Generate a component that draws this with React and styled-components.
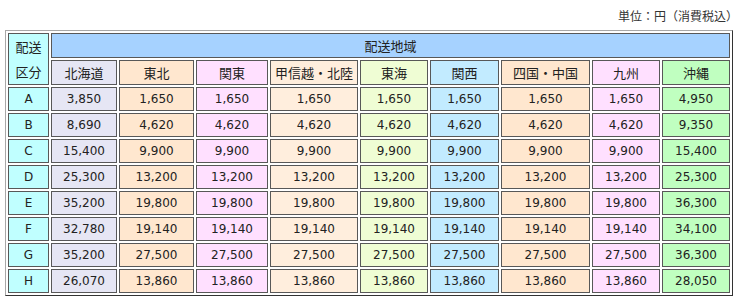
import React from "react";
import styled, { createGlobalStyle } from "styled-components";

const Global = createGlobalStyle`
  html, body { margin: 0; padding: 0; background: #fff; }
  body {
    font-family: "DejaVu Sans", Verdana, "Noto Sans CJK JP", sans-serif;
    color: #222;
  }
`;

const Page = styled.div`
  width: 728px;
  padding: 0 7px 0 5px;
`;

const Unit = styled.div`
  height: 30px;
  display: flex;
  align-items: center;
  justify-content: flex-end;
  margin-right: -5px;
  font-size: 12px;
  color: #333;
  font-family: "Noto Sans CJK JP", "DejaVu Sans", sans-serif;
`;

const Table = styled.table`
  width: 728px;
  border-collapse: separate;
  border-spacing: 2px;
  border: 1px solid;
  border-color: #a8a8a8 #333 #333 #a8a8a8;
  box-sizing: border-box;
`;

const Cell = styled.td`
  border: 1px solid #585858;
  padding: 0;
  height: 22px;
  text-align: center;
  vertical-align: middle;
  background: ${(p) => p.$bg};
  font-size: ${(p) => (p.$cjk ? "13px" : "12px")};
  font-weight: normal;
  font-family: ${(p) =>
    p.$cjk
      ? '"Noto Sans CJK JP", "DejaVu Sans", sans-serif'
      : '"DejaVu Sans", Verdana, "Noto Sans CJK JP", sans-serif'};
  color: #222;
  white-space: nowrap;
  line-height: 1.2;
  ${(p) => (p.$w ? `width: ${p.$w - 2}px;` : "")}
`;

const KubunHead = styled(Cell)`
  line-height: 25px;
`;

const cols = [
  { name: "北海道", bg: "#e6e6f4", w: 66 },
  { name: "東北", bg: "#ffe7cf", w: 75 },
  { name: "関東", bg: "#ffe0ff", w: 72 },
  { name: "甲信越・北陸", bg: "#ffeedd", w: 88 },
  { name: "東海", bg: "#effdd4", w: 68 },
  { name: "関西", bg: "#c2ebff", w: 69 },
  { name: "四国・中国", bg: "#ffe7cf", w: 89 },
  { name: "九州", bg: "#ffe0ff", w: 68 },
  { name: "沖縄", bg: "#c0ffc0", w: 68 },
];

const rows = [
  ["A", "3,850", "1,650", "1,650", "1,650", "1,650", "1,650", "1,650", "1,650", "4,950"],
  ["B", "8,690", "4,620", "4,620", "4,620", "4,620", "4,620", "4,620", "4,620", "9,350"],
  ["C", "15,400", "9,900", "9,900", "9,900", "9,900", "9,900", "9,900", "9,900", "15,400"],
  ["D", "25,300", "13,200", "13,200", "13,200", "13,200", "13,200", "13,200", "13,200", "25,300"],
  ["E", "35,200", "19,800", "19,800", "19,800", "19,800", "19,800", "19,800", "19,800", "36,300"],
  ["F", "32,780", "19,140", "19,140", "19,140", "19,140", "19,140", "19,140", "19,140", "34,100"],
  ["G", "35,200", "27,500", "27,500", "27,500", "27,500", "27,500", "27,500", "27,500", "36,300"],
  ["H", "26,070", "13,860", "13,860", "13,860", "13,860", "13,860", "13,860", "13,860", "28,050"],
];

const KUBUN_BG = "#c0ffff";
const AREA_BG = "#a6d2ff";

export default function App() {
  return (
    <Page>
      <Global />
      <Unit>単位：円（消費税込）</Unit>
      <Table>
        <tbody>
          <tr>
            <KubunHead as="th" rowSpan={2} $bg={KUBUN_BG} $cjk $w={41}>
              配送
              <br />
              区分
            </KubunHead>
            <Cell as="th" colSpan={9} $bg={AREA_BG} $cjk>
              配送地域
            </Cell>
          </tr>
          <tr>
            {cols.map((c) => (
              <Cell as="th" key={c.name} $bg={c.bg} $cjk $w={c.w}>
                {c.name}
              </Cell>
            ))}
          </tr>
          {rows.map((r) => (
            <tr key={r[0]}>
              <Cell $bg={KUBUN_BG}>{r[0]}</Cell>
              {r.slice(1).map((v, i) => (
                <Cell key={i} $bg={cols[i].bg}>
                  {v}
                </Cell>
              ))}
            </tr>
          ))}
        </tbody>
      </Table>
    </Page>
  );
}
